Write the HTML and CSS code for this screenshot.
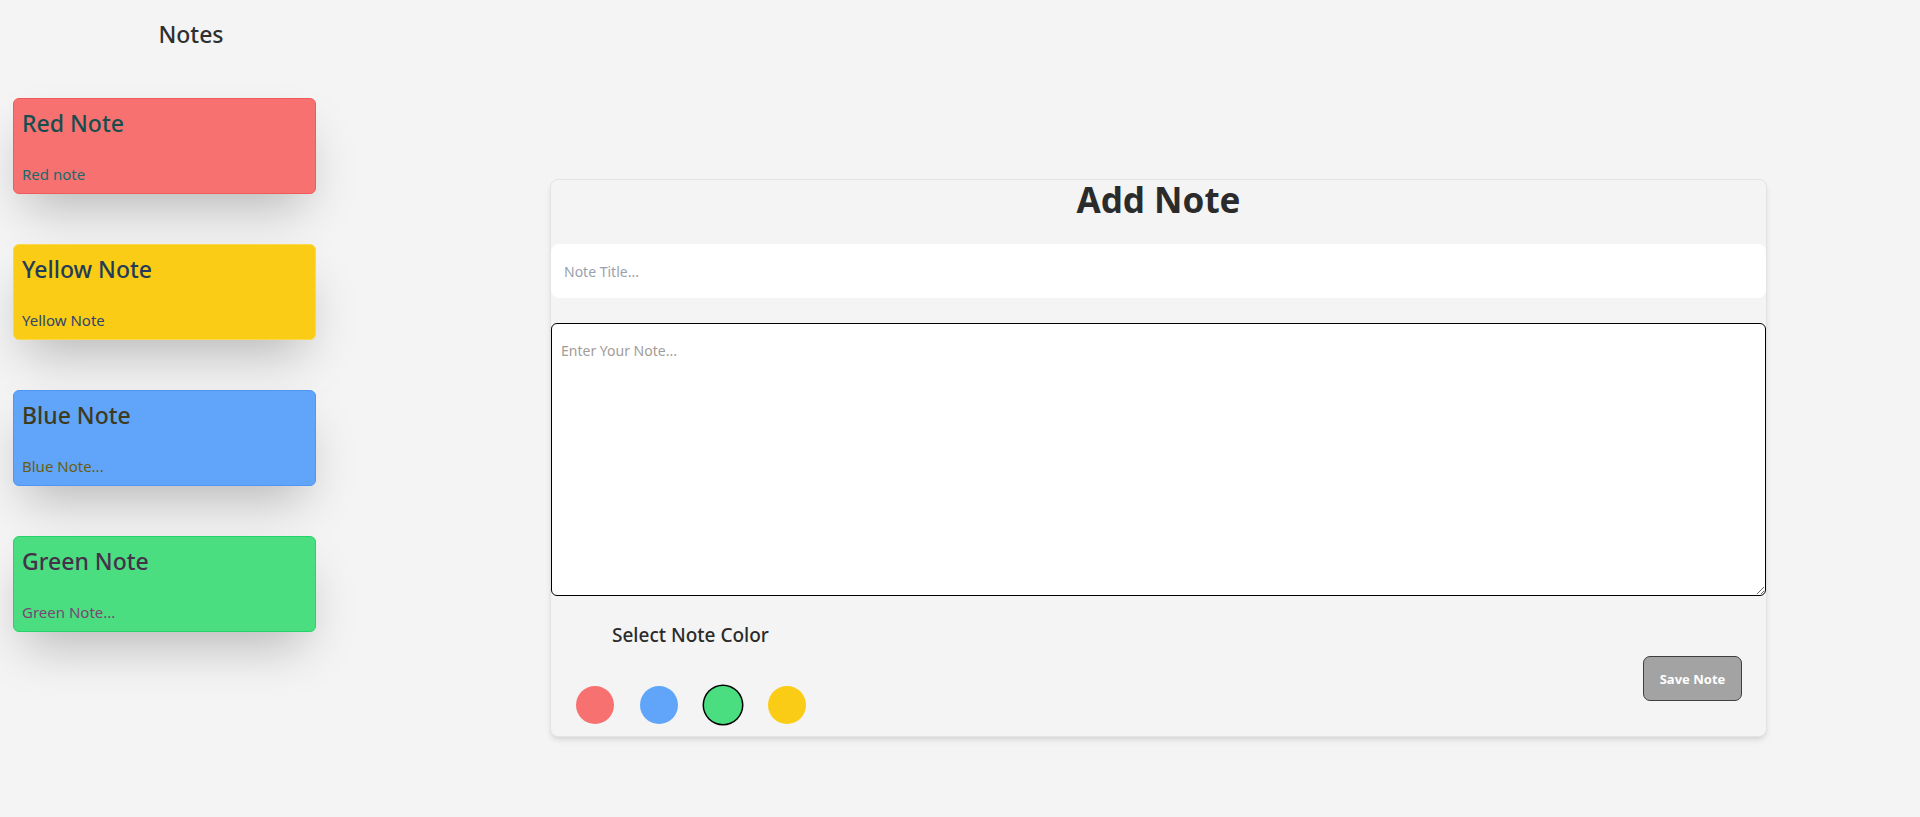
FILE: index.html
```html
<!DOCTYPE html>
<html lang="en">
<head>
<meta charset="utf-8">
<title>Notes</title>
<link rel="stylesheet" href="styles.css">
</head>
<body>
  <aside class="sidebar">
    <h2 class="sidebar-title">Notes</h2>
    <div class="note-list">
      <div class="note note-red">
        <h3 class="note-title">Red Note</h3>
        <p class="note-text">Red note</p>
      </div>
      <div class="note note-yellow">
        <h3 class="note-title">Yellow Note</h3>
        <p class="note-text">Yellow Note</p>
      </div>
      <div class="note note-blue">
        <h3 class="note-title">Blue Note</h3>
        <p class="note-text">Blue Note...</p>
      </div>
      <div class="note note-green">
        <h3 class="note-title">Green Note</h3>
        <p class="note-text">Green Note...</p>
      </div>
    </div>
  </aside>

  <main class="main">
    <form class="editor">
      <h1 class="editor-title">Add Note</h1>
      <input class="title-input" type="text" placeholder="Note Title...">
      <textarea class="body-input" placeholder="Enter Your Note..."></textarea>
      <div class="editor-footer">
        <div class="color-picker">
          <p class="picker-label">Select Note Color</p>
          <div class="swatches">
            <span class="swatch swatch-red"></span>
            <span class="swatch swatch-blue"></span>
            <span class="swatch swatch-green selected"></span>
            <span class="swatch swatch-yellow"></span>
          </div>
        </div>
        <button class="save-btn" type="button">Save Note</button>
      </div>
    </form>
  </main>
</body>
</html>
```

FILE: styles.css
```css
* {
  box-sizing: border-box;
}

html, body {
  margin: 0;
  padding: 0;
}

body {
  background: #f4f4f4;
  font-family: "Noto Sans", "Open Sans", sans-serif;
  color: #2d2d2d;
  display: flex;
  min-height: 817px;
}

/* Sidebar */
.sidebar {
  width: 382px;
  flex: none;
  padding-top: 18px;
}

.sidebar-title {
  margin: 0;
  text-align: center;
  font-size: 23px;
  line-height: 32px;
  font-weight: 500;
  color: #2f2f2f;
}

.note-list {
  margin-top: 48px;
  padding-left: 13px;
  display: flex;
  flex-direction: column;
  gap: 50px;
}

.note {
  width: 303px;
  border: 1px solid;
  border-radius: 6px;
  padding: 8px 8px 7px 8px;
  box-shadow: 0 25px 50px -12px rgba(0, 0, 0, 0.25);
}

.note-title {
  margin: 0 0 23px 0;
  font-size: 23px;
  line-height: 32px;
  font-weight: 500;
}

.note-text {
  margin: 0;
  font-size: 15px;
  line-height: 24px;
  font-weight: 400;
}

.note-red {
  background: #f87171;
  border-color: #f05a5a;
}
.note-red .note-title { color: #164e4e; }
.note-red .note-text { color: #166b6b; }

.note-yellow {
  background: #facc15;
  border-color: #fbd84a;
}
.note-yellow .note-title { color: #233a5a; }
.note-yellow .note-text { color: #2f4470; }

.note-blue {
  background: #60a5fa;
  border-color: #4f95f2;
}
.note-blue .note-title { color: #3f3a1c; }
.note-blue .note-text { color: #6a5d0c; }

.note-green {
  background: #4ade80;
  border-color: #22d46a;
}
.note-green .note-title { color: #45314a; }
.note-green .note-text { color: #7a4774; }

/* Main editor */
.main {
  flex: 1;
  padding: 179px 153px 0 168px;
}

.editor {
  background: #f4f4f4;
  border: 1px solid #e4e4e4;
  border-radius: 8px;
  box-shadow: 0 4px 6px -1px rgba(0, 0, 0, 0.1), 0 2px 4px -2px rgba(0, 0, 0, 0.08);
  display: flex;
  flex-direction: column;
  margin: 0;
}

.editor-title {
  margin: 0;
  text-align: center;
  font-size: 35px;
  line-height: 40px;
  font-weight: 700;
  color: #2b2b2b;
}

.title-input {
  margin-top: 24px;
  height: 54px;
  border: none;
  border-radius: 8px;
  background: #ffffff;
  padding: 0 13px;
  font-family: inherit;
  font-size: 14px;
  outline: none;
}

.title-input::placeholder {
  color: #9aa1ad;
}

.body-input {
  margin-top: 25px;
  height: 273px;
  border: 1px solid #000000;
  border-radius: 6px;
  background: #ffffff;
  padding: 17px 9px;
  font-family: inherit;
  font-size: 14px;
  line-height: 20px;
  resize: both;
  outline: none;
}

.body-input::placeholder {
  color: #a39c97;
}

.editor-footer {
  display: flex;
  justify-content: space-between;
  align-items: flex-end;
  padding: 25px 24px 12px 25px;
}

.picker-label {
  margin: 0 0 37px 36px;
  font-size: 19px;
  line-height: 28px;
  font-weight: 500;
  color: #2b2b2b;
}

.swatches {
  display: flex;
  gap: 26px;
}

.swatch {
  width: 38px;
  height: 38px;
  border-radius: 50%;
  display: block;
}

.swatch-red { background: #f87171; }
.swatch-blue { background: #60a5fa; }
.swatch-green { background: #4ade80; }
.swatch-yellow { background: #facc15; }

.swatch.selected {
  box-shadow: 0 0 0 1.5px #000000;
}

.save-btn {
  width: 99px;
  height: 45px;
  margin-bottom: 23px;
  background: #a3a3a3;
  border: 1px solid #3f3f3f;
  border-radius: 7px;
  color: #ffffff;
  font-family: inherit;
  font-size: 13px;
  font-weight: 700;
  cursor: pointer;
}
```
